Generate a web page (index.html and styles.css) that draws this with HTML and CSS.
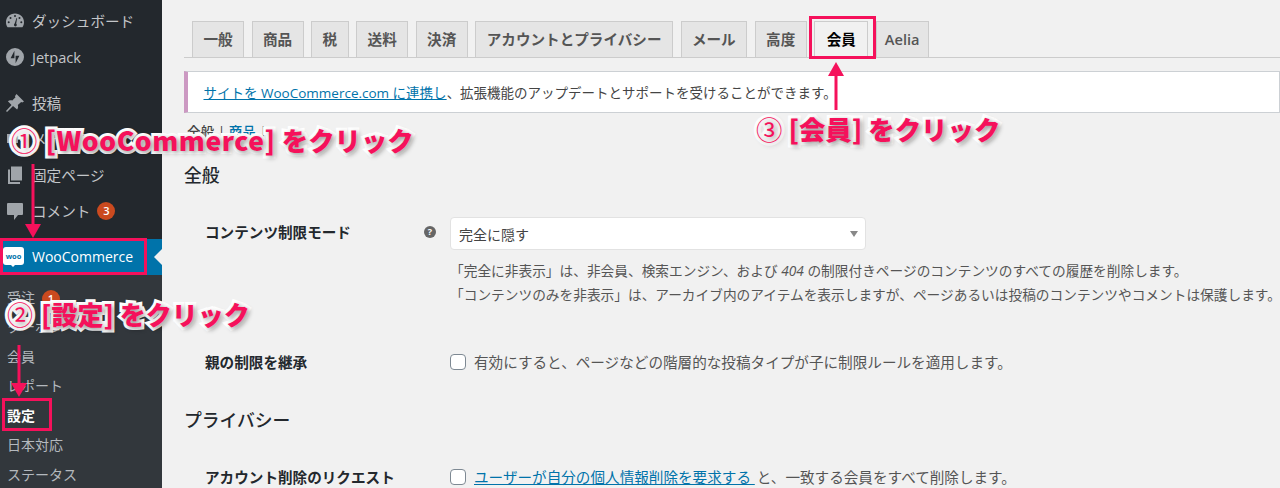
FILE: index.html
```html
<!DOCTYPE html>
<html lang="ja">
<head>
<meta charset="utf-8">
<title>WooCommerce 設定</title>
<link rel="stylesheet" href="styles.css">
</head>
<body>
<div class="app">
  <nav class="side">
    <ul class="menu">
      <li class="item"><svg class="ic" viewBox="0 0 20 20"><path fill-rule="evenodd" d="M10 2.5C4.8 2.5 1 6.4 1 11.3c0 1.9.6 3.6 1.6 5h14.8c1-1.4 1.6-3.1 1.6-5 0-4.9-3.800-8.800-9-8.800zM10 4a1 1 0 110 2 1 1 0 010-2zM5.500 6a1 1 0 110 2 1 1 0 010-2zm9 0a1 1 0 110 2 1 1 0 010-2zM3.700 10.300a1 1 0 110 2 1 1 0 010-2zm12.600 0a1 1 0 110 2 1 1 0 010-2zM9 14c0-.7.3-1.200.7-1.500L11.500 7l.6.2-.9 5.600c.4.3.6.7.6 1.200a1.400 1.400 0 01-2.800 0z"/></svg>ダッシュボード</li>
      <li class="item"><svg class="ic" viewBox="0 0 20 20"><path fill-rule="evenodd" d="M10 1a9 9 0 100 18 9 9 0 000-18zM9.400 3.800v7.400H5.600zM10.600 16.200V8.800h3.800z"/></svg>Jetpack</li>
      <li class="item sep"><svg class="ic" viewBox="0 0 20 20"><path d="M11.500 1l7.500 7.500-1.800 1-1-.6-3.400 3.200c.6 1.700.3 3.200-.7 4.400L8 12.900l-6 6-1-1 5.500-6-3.600-3.600c1.200-1 2.700-1.300 4.400-.7l3.200-3.400-.6-1z"/></svg>投稿</li>
      <li class="item"><svg class="ic" viewBox="0 0 20 20"><path d="M2 5h11v9H2zM15 3h3v9h-3z"/></svg>メディア</li>
      <li class="item"><svg class="ic" viewBox="0 0 20 20"><path d="M6 1.500h11v14H6zM3 4.500h2v12.500h10v2H3z"/></svg>固定ページ</li>
      <li class="item"><svg class="ic" viewBox="0 0 20 20"><path d="M3 2h14a1 1 0 011 1v10a1 1 0 01-1 1h-4l-4 5v-5H3a1 1 0 01-1-1V3a1 1 0 011-1z"/></svg>コメント<span class="count">3</span></li>
      <li class="item current sep">
        <span class="woo">woo</span>WooCommerce
      </li>
    </ul>
    <ul class="sub">
      <li>受注<span class="count">1</span></li>
      <li>クーポン</li>
      <li>会員</li>
      <li>レポート</li>
      <li class="on">設定</li>
      <li>日本対応</li>
      <li>ステータス</li>
    </ul>
  </nav>

  <main class="main">
    <div class="tabs">
      <a class="tab">一般</a>
      <a class="tab">商品</a>
      <a class="tab">税</a>
      <a class="tab">送料</a>
      <a class="tab">決済</a>
      <a class="tab">アカウントとプライバシー</a>
      <a class="tab">メール</a>
      <a class="tab">高度</a>
      <a class="tab active">会員</a>
      <a class="tab">Aelia</a>
    </div>
    <div class="notice"><a class="link">サイトを WooCommerce.com に連携し</a>、拡張機能のアップデートとサポートを受けることができます。</div>
    <div class="subnav">全般 | <a class="plain">商品</a> |</div>
    <h2 class="h-first">全般</h2>
    <div class="row row-mode">
      <div class="label">コンテンツ制限モード<span class="help">?</span></div>
      <div class="field">
        <div class="select">完全に隠す<span class="caret"></span></div>
        <p class="desc">「完全に非表示」は、非会員、検索エンジン、および <i>404</i> の制限付きページのコンテンツのすべての履歴を削除します。</p>
        <p class="desc">「コンテンツのみを非表示」は、アーカイブ内のアイテムを表示しますが、ページあるいは投稿のコンテンツやコメントは保護します。</p>
      </div>
    </div>
    <div class="row row-inherit">
      <div class="label">親の制限を継承</div>
      <div class="field check"><span class="box"></span>有効にすると、ページなどの階層的な投稿タイプが子に制限ルールを適用します。</div>
    </div>
    <h2 class="h-privacy">プライバシー</h2>
    <div class="row row-delete">
      <div class="label">アカウント削除のリクエスト</div>
      <div class="field check"><span class="box"></span><a class="link">ユーザーが自分の個人情報削除を要求する </a>と、一致する会員をすべて削除します。</div>
    </div>
  </main>
</div>

<div class="mark mark-woo"></div>
<div class="mark mark-set"></div>
<div class="mark mark-tab"></div>

<svg class="arrow arrow-1" viewBox="0 0 16 74"><path d="M6.500 0h3v62h-3z"/><path d="M0 60h16l-8 14z"/></svg>
<svg class="arrow arrow-2" viewBox="0 0 16 52"><path d="M6.500 0h3v40h-3z"/><path d="M0 38h16l-8 14z"/></svg>
<svg class="arrow arrow-3" viewBox="0 0 16 48"><path d="M6.500 10h3v38h-3z"/><path d="M0 14h16L8 0z"/></svg>

<div class="note note-1"><span class="num">①</span><span class="wide">[WooCommerce]</span> をクリック</div>
<div class="note note-2"><span class="num">②</span>[設定] をクリック</div>
<div class="note note-3"><span class="num">③</span>[会員] をクリック</div>
</body>
</html>
```

FILE: styles.css
```css
* { box-sizing: border-box; }
html, body { margin: 0; height: 488px; overflow: hidden; }
body {
  position: relative;
  background: #f1f1f1;
  color: #444;
  font: 14.600px/1.4 "Open Sans", "Noto Sans CJK JP", sans-serif;
}
ul { list-style: none; margin: 0; padding: 0; }
p { margin: 0; }

.app { display: flex; height: 488px; }

/* sidebar */
.side { width: 162px; flex: none; background: #23282d; color: #c3c6c9; }
.menu { padding-top: 3px; }
.item { height: 36px; display: flex; align-items: center; padding-left: 5px; white-space: nowrap; }
.sep { margin-top: 10px; }
.ic { width: 20px; height: 20px; margin-right: 7px; flex: none; fill: #a0a5aa; }
.count {
  display: inline-block; width: 18px; height: 18px; margin-left: 7px;
  border-radius: 50%; background: #ca4a1f; color: #fff;
  font-size: 11px; line-height: 18px; text-align: center; font-weight: 600;
}
.current { position: relative; background: #0073aa; color: #fff; padding-left: 3px; font-size: 14px; }
.current::after {
  content: ""; position: absolute; right: 0; top: 10px;
  border: 8px solid transparent; border-left-width: 0; border-right-color: #f1f1f1;
}
.woo {
  width: 21px; height: 18px; margin-right: 8px; margin-bottom: 2px;
  border-radius: 3px; background: #fff; color: #0073aa;
  font-size: 7.500px; line-height: 18px; font-weight: 700; text-align: center; position: relative;
}
.woo::after {
  content: ""; position: absolute; left: 7px; top: 17px;
  border: 3px solid transparent; border-top-color: #fff;
}
.sub { background: #32373c; padding-top: 7.500px; height: 213px; color: #b4b9be; }
.sub li { height: 29.500px; padding-left: 7px; line-height: 29px; white-space: nowrap; font-size: 14px; }
.sub .on { color: #fff; font-weight: 700; }

/* main */
.main { flex: 1; min-width: 0; padding: 21px 0 0 22px; }
.tabs { display: flex; gap: 7.600px; padding-left: 8px; border-bottom: 1px solid #ccc; height: 37px; }
.tab {
  height: 36px; padding: 0 10.400px; border: 1px solid #ccc; border-bottom: 0;
  background: #e5e5e5; color: #555; font-weight: 700; line-height: 34px; white-space: nowrap;
}
.active { height: 37px; padding: 0 11.400px; background: #f1f1f1; color: #000; }
.tab:last-child { font-weight: 600; padding: 0 8px; }
.notice {
  margin-top: 13px; height: 42px; background: #fff;
  border: 1px solid #ccd0d4; border-left: 4px solid #cc99c2;
  padding-left: 15.500px; line-height: 42px; font-size: 13.500px; color: #444; white-space: nowrap;
}
.link { color: #0073aa; text-decoration: underline; }
.plain { color: #0073aa; }
.subnav { margin: 9px 0 0 3px; height: 20px; font-size: 13.600px; font-weight: 500; line-height: 20px; }
h2 { margin: 0; font-size: 17.800px; font-weight: 500; line-height: 26px; color: #23282d; }
.h-first { margin-top: 20px; }
.row { display: grid; grid-template-columns: 245px 1fr; padding-left: 21px; }
.row-mode { margin-top: 29px; }
.row-inherit { margin-top: 40px; }
.h-privacy { margin-top: 30px; }
.row-delete { margin-top: 29px; }
.label { display: flex; justify-content: space-between; align-items: center; height: 30px; padding-right: 14px; font-weight: 700; color: #23282d; white-space: nowrap; }
.help {
  width: 12px; height: 12px; border-radius: 50%; background: #666; color: #fff;
  font-size: 9px; line-height: 12px; text-align: center; font-weight: 700;
}
.field { font-size: 13.700px; white-space: nowrap; }
.select {
  position: relative; width: 416px; height: 33px; margin-bottom: 9px; padding-left: 8px;
  background: #fff; border: 1px solid #e2e2e2; border-radius: 4px;
  line-height: 34px; font-size: 14px; color: #444;
}
.caret {
  position: absolute; right: 7px; top: 13px;
  border: 4px solid transparent; border-bottom-width: 0; border-top: 6px solid #888;
}
.desc { line-height: 24px; height: 24px; color: #555; }
.check { display: flex; align-items: center; height: 30px; color: #555; font-size: 14.600px; }
.box {
  width: 16px; height: 16px; margin-right: 8px; flex: none;
  background: #fff; border: 1px solid #7e8993; border-radius: 4px;
}
.check .link { white-space: pre; padding-right: 2px; }

/* annotations */
.mark { position: absolute; border: 3px solid #f5115b; }
.mark-woo { left: 0; top: 238px; width: 147px; height: 37px; }
.mark-set { left: 2px; top: 398px; width: 50px; height: 33px; }
.mark-tab { left: 809px; top: 16px; width: 67px; height: 43px; }
.arrow { position: absolute; fill: #f5115b; width: 16px; }
.arrow-1 { left: 25px; top: 164px; height: 74px; }
.arrow-2 { left: 11px; top: 345px; height: 52px; }
.arrow-3 { left: 828px; top: 62px; height: 48px; }
.note {
  position: absolute; color: #f5115b; font-weight: 900; font-size: 26.400px; line-height: 34px;
  white-space: nowrap; font-family: "Noto Sans CJK JP", sans-serif;
  -webkit-text-stroke: 6px #fff; paint-order: stroke fill;
  text-shadow: 2px 2px 5px rgba(0, 0, 0, .45);
}
.num { font-weight: 400; margin-right: 8px; }
.wide { letter-spacing: .6px; }
.note-1 { left: 11px; top: 123px; }
.note-2 { left: 7px; top: 297px; font-size: 26px; }
.note-3 { left: 756px; top: 112px; }
.note-3 .num { margin-right: 6px; }
```
